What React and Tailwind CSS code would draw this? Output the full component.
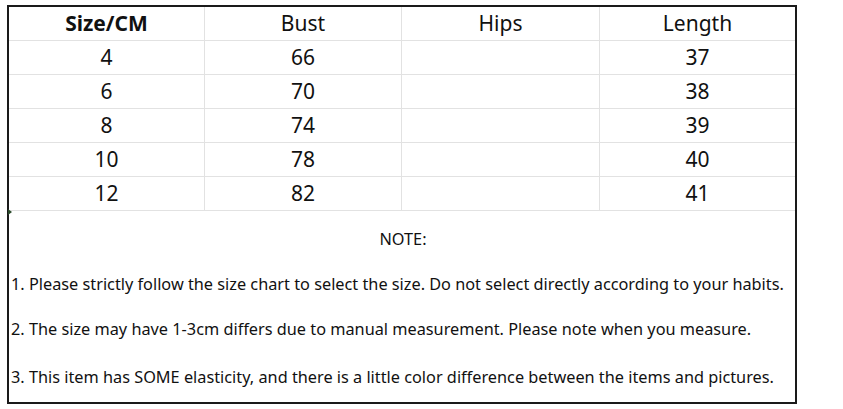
import React from "react";

const rows = [
  ["4", "66", "", "37"],
  ["6", "70", "", "38"],
  ["8", "74", "", "39"],
  ["10", "78", "", "40"],
  ["12", "82", "", "41"],
];

export default function App() {
  const font = { fontFamily: '"Noto Sans", "Open Sans", sans-serif' };
  return (
    <div className="w-[843px] h-[409px] bg-white overflow-hidden pt-[5px] pl-[7px]" style={font}>
      <div className="relative w-[790px] h-[399px] border-2 border-[#1a1a1a] text-[#111] flex flex-col">
        <div className="grid grid-cols-[196px_197px_198px_1fr]">
          {["Size/CM", "Bust", "Hips", "Length"].map((h, i) => (
            <div
              key={h}
              className={`h-[34px] flex items-center justify-center text-[21px] border-b border-[#e2e2e2] ${i < 3 ? "border-r" : ""} ${i === 0 ? "font-bold" : ""}`}
            >
              {h}
            </div>
          ))}
          {rows.map((r, ri) =>
            r.map((c, ci) => (
              <div
                key={ri + "-" + ci}
                className={`h-[34px] flex items-center justify-center text-[21px] border-b border-[#e2e2e2] ${ci < 3 ? "border-r" : ""}`}
              >
                {c}
              </div>
            ))
          )}
        </div>
        <div className="absolute left-[-1px] top-[202px] w-0 h-0 border-t-[3px] border-b-[3px] border-l-[4px] border-t-transparent border-b-transparent border-l-[#2a4a2a]" />
        <div className="flex flex-col text-[16.3px] pl-[2px] pt-[6px]">
          <div className="h-[45px] flex items-center justify-center">NOTE:</div>
          <div className="h-[45px] flex items-center whitespace-nowrap">
            1. Please strictly follow the size chart to select the size. Do not select directly according to your habits.
          </div>
          <div className="h-[45px] flex items-center whitespace-nowrap">
            2. The size may have 1-3cm differs due to manual measurement. Please note when you measure.
          </div>
          <div className="h-[50px] flex items-center whitespace-nowrap">
            3. This item has SOME elasticity, and there is a little color difference between the items and pictures.
          </div>
        </div>
      </div>
    </div>
  );
}
